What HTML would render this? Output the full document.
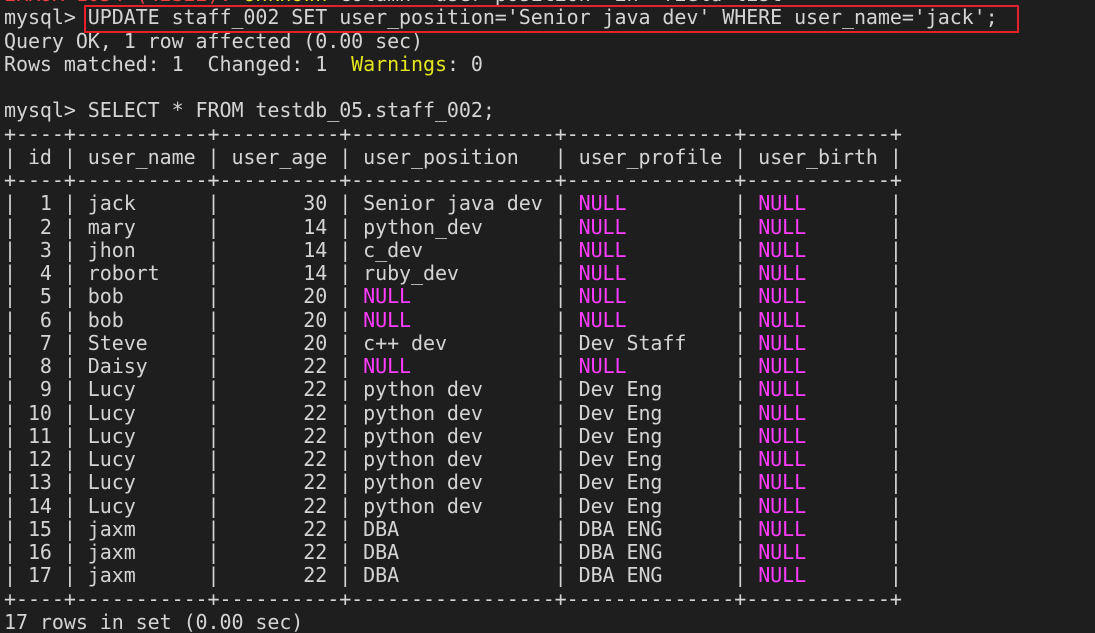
<!DOCTYPE html>
<html><head><meta charset="utf-8"><style>
html,body{margin:0;padding:0;background:#1e1e1e;width:1095px;height:633px;overflow:hidden;position:relative}
pre{position:absolute;left:4px;top:-17px;margin:0;font-family:"DejaVu Sans Mono","Liberation Mono",monospace;font-size:20px;letter-spacing:-0.07px;line-height:23.25px;color:#d4d4d4;white-space:pre}
.n{color:#ff3cff}.y{color:#e6e61e}.r{color:#f04040}
.box{position:absolute;left:84px;top:5px;width:931px;height:24px;border:2.5px solid #e8202a}
</style></head><body>
<pre><span class="r">ERROR 1054 (42S22): </span><span class="y">Unknown</span> column 'user_position' in 'field list'
mysql> UPDATE staff_002 SET user_position='Senior java dev' WHERE user_name='jack';
Query OK, 1 row affected (0.00 sec)
Rows matched: 1  Changed: 1  <span class="y">Warnings</span>: 0

mysql> SELECT * FROM testdb_05.staff_002;
+----+-----------+----------+-----------------+--------------+------------+
| id | user_name | user_age | user_position   | user_profile | user_birth |
+----+-----------+----------+-----------------+--------------+------------+
|  1 | jack      |       30 | Senior java dev | <span class="n">NULL</span>         | <span class="n">NULL</span>       |
|  2 | mary      |       14 | python_dev      | <span class="n">NULL</span>         | <span class="n">NULL</span>       |
|  3 | jhon      |       14 | c_dev           | <span class="n">NULL</span>         | <span class="n">NULL</span>       |
|  4 | robort    |       14 | ruby_dev        | <span class="n">NULL</span>         | <span class="n">NULL</span>       |
|  5 | bob       |       20 | <span class="n">NULL</span>            | <span class="n">NULL</span>         | <span class="n">NULL</span>       |
|  6 | bob       |       20 | <span class="n">NULL</span>            | <span class="n">NULL</span>         | <span class="n">NULL</span>       |
|  7 | Steve     |       20 | c++ dev         | Dev Staff    | <span class="n">NULL</span>       |
|  8 | Daisy     |       22 | <span class="n">NULL</span>            | <span class="n">NULL</span>         | <span class="n">NULL</span>       |
|  9 | Lucy      |       22 | python dev      | Dev Eng      | <span class="n">NULL</span>       |
| 10 | Lucy      |       22 | python dev      | Dev Eng      | <span class="n">NULL</span>       |
| 11 | Lucy      |       22 | python dev      | Dev Eng      | <span class="n">NULL</span>       |
| 12 | Lucy      |       22 | python dev      | Dev Eng      | <span class="n">NULL</span>       |
| 13 | Lucy      |       22 | python dev      | Dev Eng      | <span class="n">NULL</span>       |
| 14 | Lucy      |       22 | python dev      | Dev Eng      | <span class="n">NULL</span>       |
| 15 | jaxm      |       22 | DBA             | DBA ENG      | <span class="n">NULL</span>       |
| 16 | jaxm      |       22 | DBA             | DBA ENG      | <span class="n">NULL</span>       |
| 17 | jaxm      |       22 | DBA             | DBA ENG      | <span class="n">NULL</span>       |
+----+-----------+----------+-----------------+--------------+------------+
17 rows in set (0.00 sec)</pre>
<div class="box"></div>
</body></html>
